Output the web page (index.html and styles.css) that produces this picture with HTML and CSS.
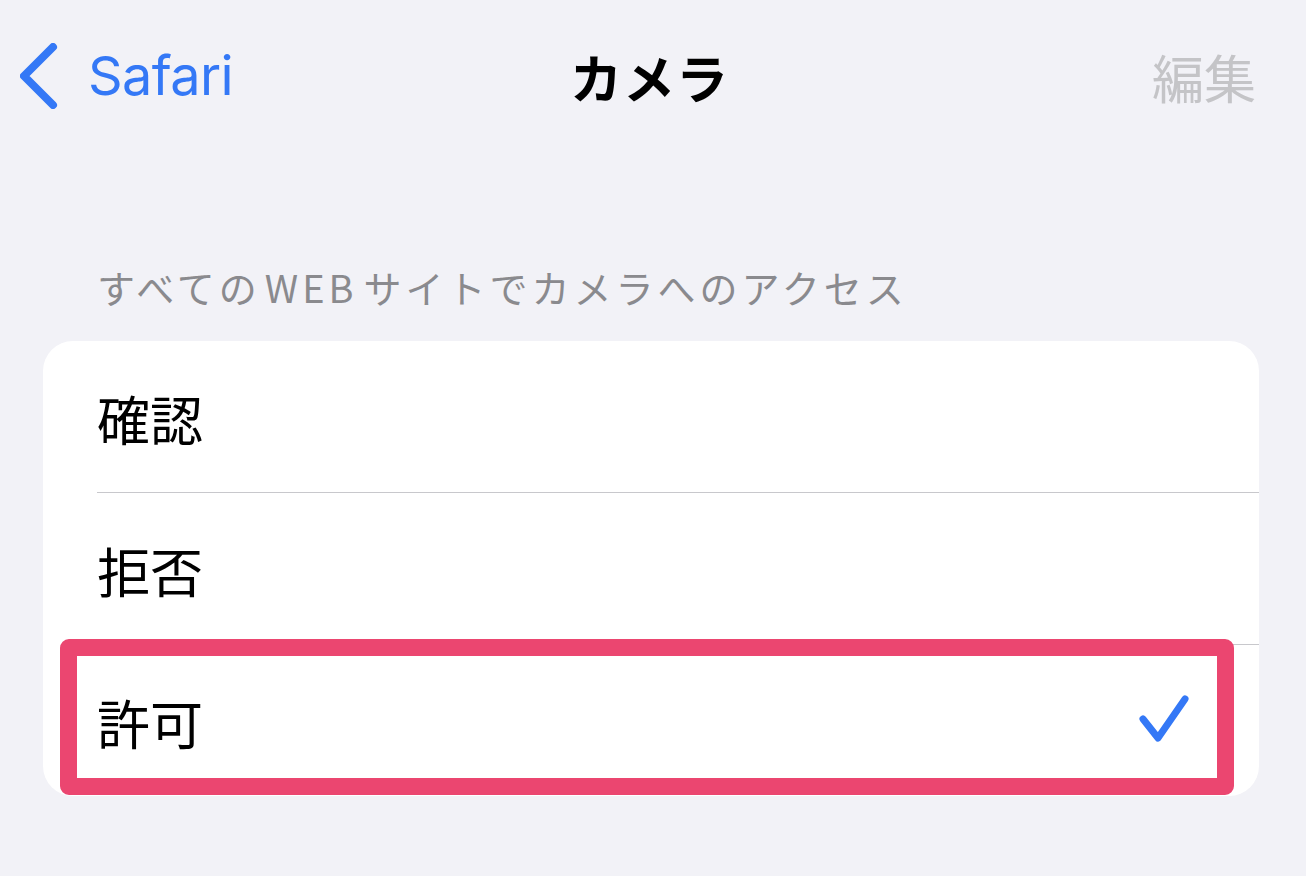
FILE: index.html
```html
<!DOCTYPE html>
<html lang="ja">
<head>
<meta charset="utf-8">
<title>カメラ</title>
<link rel="stylesheet" href="styles.css">
</head>
<body>
<div class="screen">
  <header class="nav">
    <div class="nav-left">
      <svg class="chevron" width="40" height="66" viewBox="0 0 40 66">
        <path d="M33 4 L4 33 L33 62" fill="none" stroke="#3478f6" stroke-width="8" stroke-linecap="round" stroke-linejoin="round"/>
      </svg>
      <span class="back-label">Safari</span>
    </div>
    <div class="nav-title">カメラ</div>
    <div class="nav-right">編集</div>
  </header>

  <div class="section-header">すべての<span class="latin">WEB</span>サイトでカメラへのアクセス</div>

  <div class="card">
    <div class="row"><span class="row-label">確認</span></div>
    <div class="row"><span class="row-label">拒否</span></div>
    <div class="row row-last">
      <span class="row-label">許可</span>
      <svg class="check" width="54" height="54" viewBox="0 0 54 54">
        <path d="M5 25 L20 44 L47 5" fill="none" stroke="#3478f6" stroke-width="7" stroke-linecap="round" stroke-linejoin="round"/>
      </svg>
      <div class="highlight"></div>
    </div>
  </div>
</div>
</body>
</html>
```

FILE: styles.css
```css
html, body {
  margin: 0;
  padding: 0;
  background: #f2f2f7;
}

body {
  font-family: Inter, "Noto Sans CJK JP", sans-serif;
  width: 1306px;
  height: 876px;
  overflow: hidden;
}

.screen {
  display: flex;
  flex-direction: column;
}

.nav {
  height: 154px;
  display: grid;
  grid-template-columns: 1fr auto 1fr;
  align-items: center;
  padding: 0 50px 0 20px;
}

.nav-left {
  display: flex;
  align-items: center;
  gap: 28px;
  margin-top: -3px;
}

.chevron {
  display: block;
}

.back-label {
  color: #3478f6;
  font-size: 54px;
  font-weight: 400;
  letter-spacing: -0.6px;
  line-height: 1;
}

.nav-title {
  font-family: "Noto Sans CJK JP", sans-serif;
  font-weight: 700;
  font-size: 52px;
  color: #000;
  line-height: 1;
  letter-spacing: 1px;
  padding-left: 23px;
}

.nav-right {
  justify-self: end;
  font-family: "Noto Sans CJK JP", sans-serif;
  font-size: 52px;
  color: #c4c4c7;
  line-height: 1;
}

.section-header {
  font-family: "Noto Sans CJK JP", sans-serif;
  font-size: 38px;
  color: #8a8a8e;
  line-height: 1;
  padding: 114px 0 0 97px;
  letter-spacing: 4px;
}

.latin {
  margin: 0 6px 0 4px;
}

.card {
  margin: 35px 47px 0 43px;
  background: #ffffff;
  border-radius: 30px;
  display: flex;
  flex-direction: column;
}

.row {
  position: relative;
  height: 151px;
  display: flex;
  align-items: center;
  margin-left: 54px;
  border-bottom: 1.5px solid #c8c8cc;
}

.row-last {
  border-bottom: none;
}

.row-label {
  font-family: "Noto Sans CJK JP", sans-serif;
  font-size: 53px;
  color: #000;
  line-height: 1;
  margin-top: 4px;
}

.check {
  margin-left: auto;
  margin-right: 67px;
  display: block;
}

.highlight {
  position: absolute;
  left: -37px;
  right: 25px;
  top: -6px;
  height: 156px;
  box-sizing: border-box;
  border: 17px solid #eb4670;
  border-radius: 9px;
  pointer-events: none;
}
```
